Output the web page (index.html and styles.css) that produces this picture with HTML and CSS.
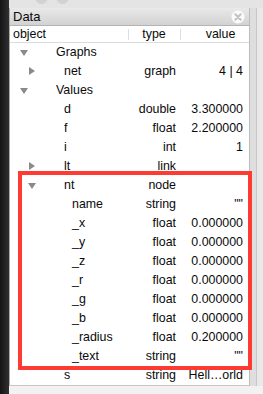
FILE: index.html
```html
<!DOCTYPE html>
<html lang="en">
<head>
  <meta charset="UTF-8">
  <title>Data</title>
  <link rel="stylesheet" href="styles.css">
</head>
<body>
  <div class="dock"></div>
  <div class="win">
    <div class="titlebar">
      <span class="light"></span>
      <span class="light second"></span>
    </div>
    <div class="main">
      <div class="panel">
        <div class="panel-head">
          <span>Data</span>
          <svg class="close" width="14" height="14" viewBox="0 0 14 14">
            <circle cx="7" cy="7" r="6.5" fill="#fbfbfb"/>
            <path d="M4.3 4.3 L9.7 9.7 M9.7 4.3 L4.3 9.7" stroke="#c2c2c2" stroke-width="2" stroke-linecap="round"/>
          </svg>
        </div>
        <div class="cols">
          <div class="col-obj">object</div>
          <div class="col-type">type</div>
          <div class="col-val">value</div>
        </div>

        <div class="rows">
          <div class="row"><div class="obj lv0"><i class="tw down"></i>Graphs</div><div class="type"></div><div class="val"></div></div>
          <div class="row"><div class="obj lv1"><i class="tw right"></i>net</div><div class="type">graph</div><div class="val">4 | 4</div></div>
          <div class="row"><div class="obj lv0"><i class="tw down"></i>Values</div><div class="type"></div><div class="val"></div></div>
          <div class="row"><div class="obj lv1"><i class="tw"></i>d</div><div class="type">double</div><div class="val">3.300000</div></div>
          <div class="row"><div class="obj lv1"><i class="tw"></i>f</div><div class="type">float</div><div class="val">2.200000</div></div>
          <div class="row"><div class="obj lv1"><i class="tw"></i>i</div><div class="type">int</div><div class="val">1</div></div>
          <div class="row"><div class="obj lv1"><i class="tw right"></i>lt</div><div class="type">link</div><div class="val"></div></div>
          <div class="row"><div class="obj lv1"><i class="tw down"></i>nt</div><div class="type">node</div><div class="val"></div></div>
          <div class="row"><div class="obj lv2"><i class="tw"></i>name</div><div class="type">string</div><div class="val">""</div></div>
          <div class="row"><div class="obj lv2"><i class="tw"></i>_x</div><div class="type">float</div><div class="val">0.000000</div></div>
          <div class="row"><div class="obj lv2"><i class="tw"></i>_y</div><div class="type">float</div><div class="val">0.000000</div></div>
          <div class="row"><div class="obj lv2"><i class="tw"></i>_z</div><div class="type">float</div><div class="val">0.000000</div></div>
          <div class="row"><div class="obj lv2"><i class="tw"></i>_r</div><div class="type">float</div><div class="val">0.000000</div></div>
          <div class="row"><div class="obj lv2"><i class="tw"></i>_g</div><div class="type">float</div><div class="val">0.000000</div></div>
          <div class="row"><div class="obj lv2"><i class="tw"></i>_b</div><div class="type">float</div><div class="val">0.000000</div></div>
          <div class="row"><div class="obj lv2"><i class="tw"></i>_radius</div><div class="type">float</div><div class="val">0.200000</div></div>
          <div class="row"><div class="obj lv2"><i class="tw"></i>_text</div><div class="type">string</div><div class="val">""</div></div>
          <div class="row"><div class="obj lv1"><i class="tw"></i>s</div><div class="type">string</div><div class="val">Hell…orld</div></div>

          <!-- markierung um nt -->
          <div class="highlight"></div>
        </div>
      </div>
      <div class="gutter">
        <div class="track"></div>
        <div class="edge"></div>
      </div>
    </div>
  </div>
</body>
</html>
```

FILE: styles.css
```css
html, body {
  margin: 0;
  height: 100%;
}
body {
  display: flex;
  width: 263px;
  height: 394px;
  overflow: hidden;
  background-color: #f2f2f2;
  font-family: "Liberation Sans", Arial, sans-serif;
  font-size: 12.4px;
  color: #0a0a0a;
}
.dock {
  width: 9px;
  background: linear-gradient(to right, #141414, #303030);
}
.win {
  flex: 1;
  display: flex;
  flex-direction: column;
}
.titlebar {
  height: 8px;
  background-color: #e4e4e4;
  position: relative;
  overflow: hidden;
}
.light {
  position: absolute;
  top: -9px;
  left: 26px;
  width: 13px;
  height: 13px;
  border-radius: 50%;
  background-color: #d2d2d2;
}
.light.second {
  left: 47px;
}
.main {
  display: flex;
}
.panel {
  width: 239px;
  border-left: 1px solid #a8a8a8;
  border-right: 1px solid #bcbcbc;
  border-bottom: 1px solid #c6c6c6;
  background-color: #fff;
}
.panel-head {
  height: 17px;
  display: flex;
  align-items: center;
  justify-content: space-between;
  padding: 0 4px 0 3px;
  background: linear-gradient(#e9e9e9, #d2d2d2);
  border-bottom: 1px solid #b4b4b4;
  font-size: 13px;
}
.close {
  display: block;
}
.cols {
  display: grid;
  grid-template-columns: 118px 52px 69px;
  height: 16px;
  line-height: 16px;
  border-bottom: 1px solid #dcdcdc;
}
.col-obj {
  padding-left: 3px;
}
.col-type, .col-val {
  text-align: center;
  background: linear-gradient(#dedede, #dedede) no-repeat left center / 1px 11px;
}
.col-val {
  padding-left: 12px;
  background-position: left center;
}
.rows {
  position: relative;
}
.row {
  display: grid;
  grid-template-columns: 118px 52px 69px;
  height: 19px;
  line-height: 19px;
}
.obj {
  display: flex;
  align-items: center;
  white-space: nowrap;
}
.lv0 { padding-left: 10px; }
.lv1 { padding-left: 18px; }
.lv2 { padding-left: 26px; }
.tw {
  width: 36px;
  height: 19px;
  flex: none;
  position: relative;
}
.tw.down::after,
.tw.right::after {
  content: "";
  position: absolute;
  width: 0;
  height: 0;
}
.tw.down::after {
  left: 0;
  top: 7px;
  border-left: 4px solid transparent;
  border-right: 4px solid transparent;
  border-top: 6px solid #8a8a8a;
}
.tw.right::after {
  left: 1px;
  top: 5px;
  border-top: 4px solid transparent;
  border-bottom: 4px solid transparent;
  border-left: 6px solid #8a8a8a;
}
.type {
  text-align: right;
  padding-right: 4px;
}
.val {
  text-align: right;
  padding-right: 6px;
  white-space: nowrap;
}
.highlight {
  position: absolute;
  top: 128px;
  left: 8px;
  width: 234px;
  height: 199px;
  box-sizing: border-box;
  border: 4px solid #fd3b32;
}
.gutter {
  flex: 1;
  display: flex;
  background-color: #e9e9e9;
}
.track {
  width: 6px;
  background-color: #dedede;
  border-right: 1px solid #c8c8c8;
}
.edge {
  flex: 1;
}
```
